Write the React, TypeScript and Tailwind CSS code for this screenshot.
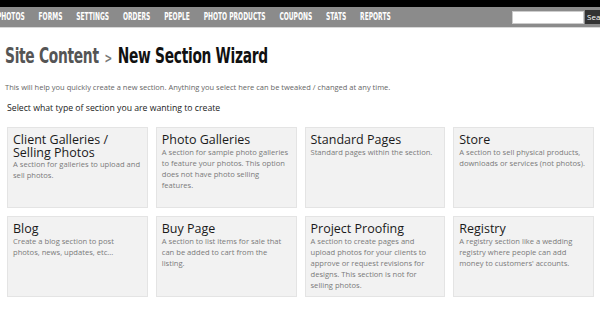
const navItems = ["PHOTOS", "FORMS", "SETTINGS", "ORDERS", "PEOPLE", "PHOTO PRODUCTS", "COUPONS", "STATS", "REPORTS"]

const sections = [
  { title: "Client Galleries / Selling Photos", text: "A section for galleries to upload and sell photos." },
  { title: "Photo Galleries", text: "A section for sample photo galleries to feature your photos. This option does not have photo selling features." },
  { title: "Standard Pages", text: "Standard pages within the section." },
  { title: "Store", text: "A section to sell physical products, downloads or services (not photos)." },
  { title: "Blog", text: "Create a blog section to post photos, news, updates, etc..." },
  { title: "Buy Page", text: "A section to list items for sale that can be added to cart from the listing." },
  { title: "Project Proofing", text: "A section to create pages and upload photos for your clients to approve or request revisions for designs. This section is not for selling photos." },
  { title: "Registry", text: "A registry section like a wedding registry where people can add money to customers' accounts." },
]

const App = () => {
  return (
    <div className="w-[600px] h-[314px] overflow-hidden bg-white font-['Open_Sans',sans-serif]">
      {/* Top bar */}
      <div className="h-[7px] bg-black" />
      <div className="h-[21px] bg-[#8b8b8b] flex items-center border-b border-[#d8d8d8]">
        <div className="w-[420px] shrink-0 ml-[-3px]">
          <nav className="flex gap-[23px] origin-left scale-x-[0.6] whitespace-nowrap font-['DejaVu_Sans_Condensed','DejaVu_Sans',sans-serif] font-bold text-[11px] leading-[14px] text-white">
            {navItems.map((item) => (
              <span key={item} className="shrink-0">{item}</span>
            ))}
          </nav>
        </div>
        <div className="ml-auto flex items-center shrink-0 mr-[-25px]">
          <div className="w-[72px] h-[13px] bg-white border border-[#ccc]" />
          <div className="ml-[1px] h-[14px] w-[40px] bg-[#333] text-white text-[8px] leading-[14px] pl-[2px]">
            Search
          </div>
        </div>
      </div>

      {/* Heading */}
      <h1 className="mt-[15px] ml-[5px] w-[800px] origin-left scale-x-[0.73] flex items-baseline whitespace-nowrap font-['DejaVu_Sans_Condensed','DejaVu_Sans',sans-serif] text-[21px] leading-[26px] font-bold tracking-[-0.4px]">
        <span className="text-[#555]">Site Content</span>
        <span className="text-[#777] text-[14px] mx-[8px]">&gt;</span>
        <span className="text-[#111]">New Section Wizard</span>
      </h1>

      <p className="mt-[11px] ml-[5px] text-[7.5px] leading-[11px] text-[#666]">
        This will help you quickly create a new section. Anything you select here can be tweaked / changed at any time.
      </p>
      <p className="mt-[9px] ml-[7px] text-[8.7px] leading-[13px] text-[#222]">
        Select what type of section you are wanting to create
      </p>

      {/* Section cards */}
      <div className="mt-[12px] ml-[7px] w-[587px] grid grid-cols-4 gap-x-[8px] gap-y-[8px]">
        {sections.map((s) => (
          <div key={s.title} className="h-[81px] bg-[#f2f2f2] border border-[#e4e4e4] px-[5px] pt-[6px]">
            <div className="text-[12.5px] leading-[12.5px] text-[#1a1a1a]">{s.title}</div>
            <div className="text-[7.6px] leading-[11px] text-[#7a7a7a]">{s.text}</div>
          </div>
        ))}
      </div>
    </div>
  )
}

export default App
